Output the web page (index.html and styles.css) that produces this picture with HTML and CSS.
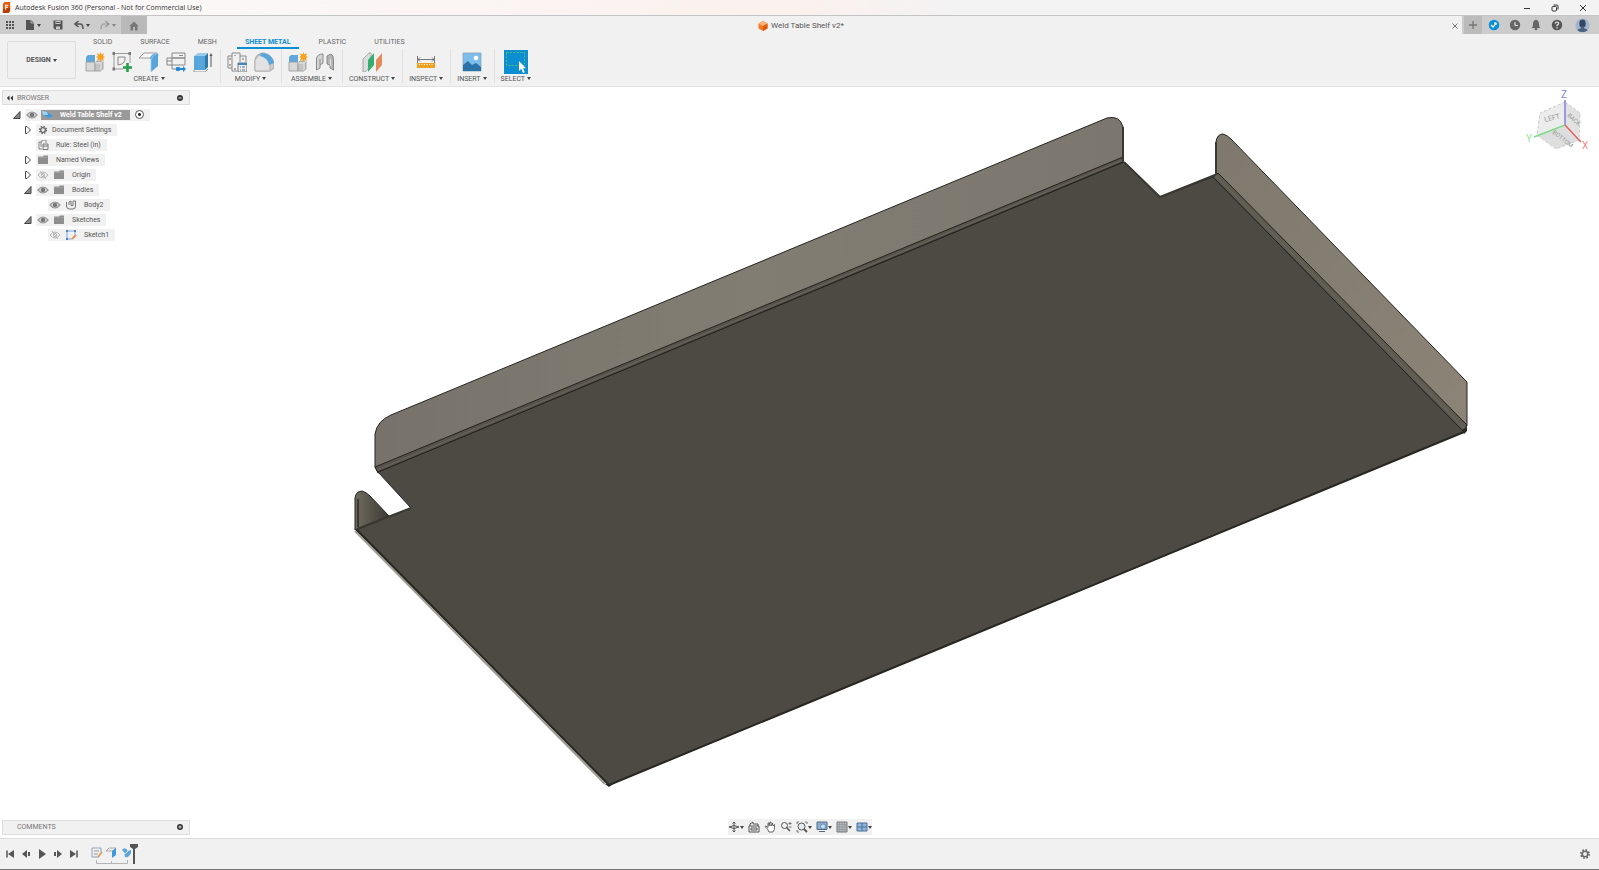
FILE: index.html
```html
<!DOCTYPE html>
<html lang="en">
<head>
    <meta charset="UTF-8">
    <meta name="viewport" content="width=device-width, initial-scale=1.0">
    <title>Autodesk Fusion 360</title>
    <link rel="stylesheet" href="styles.css">
</head>
<body>

<!-- shared icons -->
<svg class="sprite" aria-hidden="true">
    <symbol id="eye" viewBox="0 0 14 10">
        <path d="M2 5Q7 -1 12 5Q7 11 2 5Z" fill="#d8d8d8" stroke="#999" stroke-width="1.2"/>
        <circle cx="7" cy="5" r="2.2" fill="#777"/>
    </symbol>
    <symbol id="eye-off" viewBox="0 0 14 10">
        <path d="M2 5Q7 -1 12 5Q7 11 2 5Z" fill="#f4f4f4" stroke="#b5b5b5"/>
        <circle cx="7" cy="5" r="1.7" fill="none" stroke="#b5b5b5"/>
        <path d="M4 1L10 9" stroke="#b5b5b5"/>
    </symbol>
    <symbol id="folder" viewBox="0 0 14 10">
        <path d="M2 1.5H7L8 .5H12V9H2Z" fill="#8e8e8e"/>
        <path d="M2 2.5H12" stroke="#aaa" stroke-width=".6"/>
    </symbol>
    <symbol id="closed" viewBox="0 0 12 10">
        <path d="M3.500 1.500H5L8.500 5L5 8.500H3.500Z" fill="#fff" stroke="#444"/>
    </symbol>
    <symbol id="open" viewBox="0 0 12 10">
        <path d="M9 1.5V8.5H2.5Z" fill="#888" stroke="#444"/>
    </symbol>
    <symbol id="gear" viewBox="0 0 12 12">
        <circle cx="6" cy="6" r="4.2" fill="none" stroke="#666" stroke-width="1.6" stroke-dasharray="1.7 1.6"/>
        <circle cx="6" cy="6" r="2.8" fill="none" stroke="#666" stroke-width="1.6"/>
    </symbol>
    <symbol id="component" viewBox="0 0 20 20">
        <path d="M1 5L3 3H10V10H1Z" fill="#5fa8dc"/>
        <path d="M1 10H10V19H1Z" fill="#d8d8d8" stroke="#999" stroke-width=".8"/>
        <path d="M10 11L12 9H18V17L16 19H10Z" fill="#c4c4c4" stroke="#999" stroke-width=".8"/>
        <path d="M10 11H16V19M16 11L18 9" fill="none" stroke="#eee" stroke-width=".8"/>
        <path d="M15.500 0L16.500 2.600L19.200 1.300L17.900 4L20 5L17.900 6L19.200 8.700L16.500 7.400L15.500 10L14.500 7.400L11.800 8.700L13.100 6L11 5L13.100 4L11.800 1.300L14.500 2.600Z" fill="#f5a11c"/>
    </symbol>
</svg>

<header class="titlebar">
    <svg class="app-logo" viewBox="0 0 10 12"><path d="M1 2L3 0H9V10L7 12H1Z" fill="#e8590c"/><path d="M1 8L9 6V10L7 12H1Z" fill="#b83c00"/><path d="M4 8.500V3.500H7M4 5.700H6.500" fill="none" stroke="#fff" stroke-width="1.200"/></svg>
    <h1 class="app-title">Autodesk Fusion 360 (Personal - Not for Commercial Use)</h1>
    <div class="window-buttons">
        <button aria-label="Minimize"><svg viewBox="0 0 10 10"><path d="M2 5.500H8" stroke="#333"/></svg></button>
        <button aria-label="Restore"><svg viewBox="0 0 10 10"><rect x="2" y="3.500" width="4.500" height="4.500" rx="1" fill="none" stroke="#333"/><path d="M3.500 2H7Q8 2 8 3V6.500" fill="none" stroke="#333"/></svg></button>
        <button aria-label="Close"><svg viewBox="0 0 10 10"><path d="M2 2L8 8M8 2L2 8" stroke="#333"/></svg></button>
    </div>
</header>

<div class="tabstrip">
    <div class="quick-access">
        <button aria-label="Data panel"><svg viewBox="0 0 10 10"><path d="M1 2H9M1 5H9M1 8H9" stroke="#555" stroke-width="2" stroke-dasharray="2 1"/></svg></button>
        <button class="has-arrow" aria-label="File"><svg viewBox="0 0 10 10"><path d="M1 0H6L9 3V10H1Z" fill="#555"/><path d="M6 0V3H9" fill="none" stroke="#ccc" stroke-width=".8"/></svg></button>
        <button class="save" aria-label="Save"><svg viewBox="0 0 10 10"><path d="M.5 .5H9.500V9.500H2L.5 8Z" fill="#555"/><path d="M2.500 1H7.500V4H2.500ZM3 6.500H7V9H3Z" fill="#ccc"/><path d="M3 2.500H7" stroke="#555"/></svg></button>
        <button class="has-arrow" aria-label="Undo"><svg viewBox="0 0 10 10"><path d="M4.500 1L1 4L4.500 7M1 4H6Q9 4 9 9" fill="none" stroke="#555" stroke-width="1.500"/></svg></button>
        <button class="has-arrow faded" aria-label="Redo"><svg viewBox="0 0 10 10"><path d="M5.500 1L9 4L5.500 7M9 4H4Q1 4 1 9" fill="none" stroke="#666" stroke-width="1.200"/></svg></button>
    </div>
    <button class="home-tab" aria-label="Home"><svg viewBox="0 0 10 10"><path d="M5 .5L9.500 5H8.500V9.500H6V6H4V9.500H1.500V5H.5Z" fill="#777"/></svg></button>
    <div class="doc-tab">
        <svg class="doc-icon" viewBox="0 0 10 10"><path d="M5 0L9.500 2.500V7.500L5 10L.5 7.500V2.500Z" fill="#f47a20"/><path d="M5 0L9.500 2.500L5 5L.5 2.500Z" fill="#fbb37c"/><path d="M5 5L9.500 2.500V7.500L5 10Z" fill="#d95b0b"/></svg>
        <span>Weld Table Shelf v2*</span>
        <button class="close-tab" aria-label="Close tab"><svg viewBox="0 0 10 10"><path d="M2.500 2.500L7.500 7.500M7.500 2.500L2.500 7.500" stroke="#777"/></svg></button>
    </div>
    <button class="new-tab" aria-label="New tab"><svg viewBox="0 0 10 10"><path d="M5 1V9M1 5H9" stroke="#777" stroke-width="1.400"/></svg></button>
    <div class="account">
        <button aria-label="Extensions"><svg viewBox="0 0 12 12"><circle cx="6" cy="6" r="5.300" fill="#0b8fd9"/><path d="M3 6L5 8L8.500 4M7 3V5H9" fill="none" stroke="#fff" stroke-width="1.200"/></svg></button>
        <button aria-label="Job status"><svg viewBox="0 0 12 12"><circle cx="6" cy="6" r="5.200" fill="#666"/><path d="M6 3V6.500H9" fill="none" stroke="#ddd" stroke-width="1.200"/></svg></button>
        <button aria-label="Notifications"><svg viewBox="0 0 12 12"><path d="M6 .5Q9 1.500 9 5Q9 8 10.500 9H1.500Q3 8 3 5Q3 1.500 6 .5Z" fill="#666"/><circle cx="6" cy="10" r="1.300" fill="#666"/></svg></button>
        <button aria-label="Help"><svg viewBox="0 0 12 12"><circle cx="6" cy="6" r="5.200" fill="#555"/><path d="M4.300 4.600Q4.500 3 6 3Q7.700 3 7.700 4.500Q7.700 5.500 6 6.200V7.300M6 8.300V9.500" fill="none" stroke="#eee" stroke-width="1.200"/></svg></button>
        <button class="avatar" aria-label="Profile"><svg viewBox="0 0 16 16"><circle cx="8" cy="8" r="7.500" fill="#a3b5cf"/><ellipse cx="8" cy="6" rx="3.400" ry="4.400" fill="#33475e"/><path d="M6.500 9H9.500V11Q13 11.500 13.500 13Q8 17 2.500 13Q3 11.500 6.500 11Z" fill="#4a6080"/></svg></button>
    </div>
</div>

<div class="ribbon">
    <button class="workspace arrow">DESIGN</button>
    <div class="ribbon-main">
        <nav class="ribbon-tabs">
            <a href="#">SOLID</a>
            <a href="#">SURFACE</a>
            <a href="#">MESH</a>
            <a href="#" class="active">SHEET METAL</a>
            <a href="#">PLASTIC</a>
            <a href="#">UTILITIES</a>
        </nav>
        <div class="groups">
            <div class="group">
                <div class="tools">
                    <button aria-label="New component"><svg viewBox="0 0 20 20"><use href="#component"/></svg></button>
                    <button aria-label="Create sketch"><svg viewBox="0 0 20 20"><path d="M2 1.500H18M2 1.500V17M18 1.500V11M2 17H11" stroke="#999" fill="none"/><path d="M.5 0H3V3H.5ZM16.500 0H19V3H16.500ZM.5 15.500H3V18.500H.5Z" fill="#777"/><path d="M6 13V5H13Q14 12 6 13Z" fill="none" stroke="#888"/><path d="M15.500 11V20M11 15.500H20" stroke="#22a04a" stroke-width="2.600"/></svg></button>
                    <button aria-label="Flange"><svg viewBox="0 0 20 20"><path d="M0 6L5 1H18L13 6Z" fill="#f7f7f7" stroke="#888" stroke-width=".8"/><path d="M11 6Q12 2 18 1Q20 2 19 5V14L12 20V8Z" fill="#58a5dc"/><path d="M12 20V8Q13 3 18 1.500" fill="none" stroke="#9acbee" stroke-width=".8"/></svg></button>
                    <button aria-label="Unfold"><svg viewBox="0 0 20 20"><path d="M6 1H19V6H6ZM1 6H19V13H1ZM6 13V17H11M13 3.500H17" fill="none" stroke="#888"/><path d="M6 6V13M1 9H6" stroke="#888"/><circle cx="12" cy="17" r="2.300" fill="#2388d6"/><path d="M13 16H17V14L20 17L17 20V18H13Z" fill="#2388d6"/></svg></button>
                    <button aria-label="Extrude"><svg viewBox="0 0 20 20"><path d="M1 4L5 1H15L12 4Z" fill="#9acaea"/><path d="M1 4H12V18H1Z" fill="#58a5dc"/><path d="M12 4L15 1V15L12 18Z" fill="#3078aa"/><path d="M1 18V20H12L15 17" fill="none" stroke="#999"/><path d="M18 3V15" stroke="#555"/><path d="M16.500 4L18 1L19.500 4Z" fill="#555"/></svg></button>
                </div>
                <button class="group-label arrow">CREATE</button>
            </div>
            <div class="group">
                <div class="tools">
                    <button aria-label="Sheet metal rules"><svg viewBox="0 0 20 20"><path d="M5 1H13V4H19V10M5 1V4H1V16H5V19H10M5 4V16M13 4V10" fill="none" stroke="#888"/><path d="M3 6V8M3 12V14M16 6V8M8 3V4M8 16V18" stroke="#666"/><path d="M11 11H20V20H11Z" fill="#eee" stroke="#777"/><path d="M11 12H20" stroke="#3d86bf" stroke-width="2"/><path d="M13 15H18M13 18H18" stroke="#4a7ba3" stroke-dasharray="1 1 4"/></svg></button>
                    <button aria-label="Fillet"><svg viewBox="0 0 20 20"><path d="M1 19V8Q2 1 10 1Q19 3 20 12V16L16 19Z" fill="#ccc" stroke="#999" stroke-width=".8"/><path d="M1 19V8L5 3Q13 4 16 11V19Z" fill="#e2e2e2" stroke="#aaa" stroke-width=".8"/><path d="M7 1Q18 1 20 11L15 13Q14 6 6 4Z" fill="#58a5dc"/></svg></button>
                </div>
                <button class="group-label arrow">MODIFY</button>
            </div>
            <div class="group">
                <div class="tools">
                    <button aria-label="New component"><svg viewBox="0 0 20 20"><use href="#component"/></svg></button>
                    <button aria-label="Joint"><svg viewBox="0 0 20 20"><path d="M1.500 18V7Q2 2 8 2V11L5 13V16Z" fill="#d5d5d5" stroke="#888"/><path d="M5 7V13" stroke="#888"/><path d="M12 4L16 2Q18.500 3 18.500 8V18L15 16V13L12 12Z" fill="#b5b5b5" stroke="#888"/><path d="M15.500 7V14" stroke="#e4e4e4"/></svg></button>
                </div>
                <button class="group-label arrow">ASSEMBLE</button>
            </div>
            <div class="group">
                <div class="tools">
                    <button aria-label="Offset plane"><svg viewBox="0 0 20 20"><path d="M1 7L7 1H9V14L3 20H1Z" fill="#ddd" stroke="#999" stroke-width=".8"/><path d="M6 8L12 1V13L6 20Z" fill="#35ae70"/><path d="M14 8L20 1V13L14 20Z" fill="#e58a5b"/></svg></button>
                </div>
                <button class="group-label arrow">CONSTRUCT</button>
            </div>
            <div class="group">
                <div class="tools">
                    <button aria-label="Measure"><svg viewBox="0 0 20 20"><path d="M1.500 4V11M18.500 4V11M2 7.500H18M4 5.500L2 7.500L4 9.500M16 5.500L18 7.500L16 9.500" fill="none" stroke="#777"/><path d="M1 11H19V16H1Z" fill="#f0a21e"/><path d="M3 12.500H18" stroke="#fff" stroke-dasharray="1 1.500"/></svg></button>
                </div>
                <button class="group-label arrow">INSPECT</button>
            </div>
            <div class="group">
                <div class="tools">
                    <button aria-label="Insert image"><svg viewBox="0 0 20 20"><path d="M1 1H19V19H1Z" fill="#7dbdeb" stroke="#8aa5b8" stroke-width=".8"/><path d="M1 13L6 9L10 13L14 11L19 15V19H1Z" fill="#2a72a8"/><circle cx="14" cy="6" r="2.300" fill="#fff"/></svg></button>
                </div>
                <button class="group-label arrow">INSERT</button>
            </div>
            <div class="group">
                <div class="tools">
                    <button class="selected" aria-label="Select"><svg viewBox="0 0 24 24"><rect x="2.500" y="2.500" width="18" height="13" fill="none" stroke="#58b878" stroke-dasharray="2 1.500"/><path d="M15 11V21L17.300 18.800L19 23L20.800 22.200L19 18.300H22Z" fill="#fff"/></svg></button>
                </div>
                <button class="group-label arrow">SELECT</button>
            </div>
        </div>
    </div>
</div>

<main class="canvas">
    <svg class="model" viewBox="0 87 1599 751" preserveAspectRatio="xMidYMid meet">
        <defs>
            <linearGradient id="back" x1="0" x2="1"><stop offset="0" stop-color="#78736a"/><stop offset=".5" stop-color="#827d73"/><stop offset="1" stop-color="#7c776e"/></linearGradient>
            <linearGradient id="side" x1="0" y1="0" x2="1" y2="1"><stop offset="0" stop-color="#7e786e"/><stop offset="1" stop-color="#8c8476"/></linearGradient>
            <linearGradient id="tip" x1="0" x2="1"><stop offset="0" stop-color="#706b60"/><stop offset="1" stop-color="#3d3a34"/></linearGradient>
        </defs>
        <g stroke="#25231f" stroke-linejoin="round">
            <path d="M375 467V434Q377 421 391 415L1107 118Q1120 115 1123 127V162L378 473Z" fill="url(#back)"/>
            <path d="M1216 173V142Q1217 134 1223 134Q1227 135 1231 139L1467 382V425L1463 432L1213 177Z" fill="url(#side)"/>
            <path d="M355 530V498Q356 491 362 491Q366 492 370 496L389 516Z" fill="url(#tip)"/>
            <path d="M378 472L1124 162L1160 197L1213 177L1464 432L609 785L356 530L411 508Z" fill="#4d4a43"/>
            <path d="M375 467L1123 157V162L378 472Z" fill="#57534b"/>
            <path d="M1218 173L1467 425L1464 432L1213 177Z" fill="#5f5b52"/>
        </g>
        <path d="M377 470L1123 160M1216 176L1465 429" stroke="#6a665d" fill="none"/>
        <path d="M1124 162L1160 197L1215 175M411 508L357 529M358 499V527" stroke="#3a3832" stroke-width="2" fill="none"/>
        <path d="M1123 127V161M1216 142V174" stroke="#3a3832" stroke-width="2" fill="none"/>
        <path d="M355 531L605 784" stroke="#a09c94" stroke-width="2" fill="none"/>
        <path d="M357 530L609 785L1464 432" stroke="#292722" stroke-width="2" fill="none"/>
        <path d="M605 784H613L609 787ZM1462 430L1467 427V431L1464 434Z" fill="#292722"/>
        <g class="cube">
            <path d="M1565 102L1540 113L1537 135L1565 125Z" fill="#ececec"/>
            <path d="M1565 102L1580 113L1579 137L1565 125Z" fill="#e2e2e2"/>
            <path d="M1565 125L1537 135L1556 149L1579 140Z" fill="#dedede"/>
            <path d="M1565 102L1540 113L1537 135L1556 149L1579 140L1580 113Z" fill="none" stroke="#c8c8c8" stroke-dasharray="3 2"/>
            <text transform="translate(1545 122) rotate(-14)">LEFT</text>
            <text class="small" transform="translate(1567 116) rotate(42)">BACK</text>
            <text class="small" transform="translate(1552 133) rotate(38)">BOTTOM</text>
            <path d="M1565 125V100" stroke="#8080e0" stroke-width="1.500"/>
            <path d="M1565 125L1534 137" stroke="#7ddc87" stroke-width="1.500"/>
            <path d="M1565 125L1581 142" stroke="#e45b5b" stroke-width="1.500"/>
            <text class="axis axis-z" x="1561" y="98">Z</text>
            <text class="axis axis-y" x="1526" y="142">Y</text>
            <text class="axis axis-x" x="1582" y="149">X</text>
        </g>
    </svg>

    <aside class="browser">
        <div class="panel-bar">
            <svg class="collapse" viewBox="0 0 8 6"><path d="M4 0V6L1 3ZM8 0V6L5 3Z" fill="#333"/></svg>
            <h2>BROWSER</h2>
            <button aria-label="Hide browser"><svg viewBox="0 0 8 8"><circle cx="4" cy="4" r="3" fill="#333"/><path d="M2.500 4H5.500" stroke="#ddd"/></svg></button>
        </div>
        <ul class="tree">
            <li>
                <div class="row"><svg class="twisty"><use href="#open"/></svg><span class="chip root"><svg><use href="#eye"/></svg><strong><svg viewBox="0 0 14 10"><path d="M1 1L6 2L12 6L8 8L2 5Z" fill="#3c9be0"/><path d="M1 1L6 2L7 5L2 5Z" fill="#a5d2f2"/></svg>Weld Table Shelf v2</strong><input type="radio" aria-label="Activate component" checked></span></div>
                <ul>
                    <li><div class="row"><svg class="twisty"><use href="#closed"/></svg><span class="chip"><svg><use href="#gear"/></svg>Document Settings</span></div></li>
                    <li><div class="row"><span class="twisty"></span><span class="chip"><svg viewBox="0 0 14 10"><path d="M3 9V2H6V0H10V3M3 9H6M5 2V7" fill="none" stroke="#888"/><path d="M7 4H12V9.500H7ZM7 6H12" fill="#eee" stroke="#777"/></svg><span class="label">Rule: Steel (in)</span></span></div></li>
                    <li><div class="row"><svg class="twisty"><use href="#closed"/></svg><span class="chip"><svg><use href="#folder"/></svg><span class="label">Named Views</span></span></div></li>
                    <li><div class="row"><svg class="twisty"><use href="#closed"/></svg><span class="chip"><svg><use href="#eye-off"/></svg><svg><use href="#folder"/></svg><span class="label">Origin</span></span></div></li>
                    <li>
                        <div class="row"><svg class="twisty"><use href="#open"/></svg><span class="chip"><svg><use href="#eye"/></svg><svg><use href="#folder"/></svg><span class="label">Bodies</span></span></div>
                        <ul>
                            <li><div class="row"><span class="chip"><svg><use href="#eye"/></svg><svg viewBox="0 0 14 10"><path d="M2.500 2V6Q2.500 9 5.500 9H9Q11.500 9 11.500 6V1H9V5.500H7V1L5 2V5" fill="#eee" stroke="#777"/></svg><span class="label">Body2</span></span></div></li>
                        </ul>
                    </li>
                    <li>
                        <div class="row"><svg class="twisty"><use href="#open"/></svg><span class="chip"><svg><use href="#eye"/></svg><svg><use href="#folder"/></svg><span class="label">Sketches</span></span></div>
                        <ul>
                            <li><div class="row"><span class="chip"><svg><use href="#eye-off"/></svg><svg viewBox="0 0 14 10"><path d="M3 1H11V5M3 1V9H8" fill="none" stroke="#7aa5dc"/><path d="M2 0H4V2H2ZM10 0H12V2H10ZM2 8H4V10H2Z" fill="#5680b8"/><path d="M8 9L12 5" stroke="#e8935a" stroke-width="2"/></svg><span class="label">Sketch1</span></span></div></li>
                        </ul>
                    </li>
                </ul>
            </li>
        </ul>
    </aside>

    <div class="bottom-row">
        <div class="panel-bar comments">
            <h2>COMMENTS</h2>
            <button aria-label="Show comments"><svg viewBox="0 0 8 8"><circle cx="4" cy="4" r="3" fill="#333"/><path d="M2.500 4H5.500M4 2.500V5.500" stroke="#ddd"/></svg></button>
        </div>
        <div class="navbar">
            <button class="has-arrow" aria-label="Orbit"><svg viewBox="0 0 12 12"><path d="M6 1V11M1 6Q6 3 11 6Q6 9 1 6M4.500 2.500L6 1L7.500 2.500M4.500 9.500L6 11L7.500 9.500" fill="none" stroke="#555"/></svg></button>
            <button aria-label="Look at"><svg viewBox="0 0 12 12"><path d="M1 5H11V11H1ZM2 5V3L5 1V3H10V5M3 7H9V9H3Z" fill="none" stroke="#555"/></svg></button>
            <button aria-label="Pan"><svg viewBox="0 0 12 12"><path d="M3.500 8L1 5.500L2 5L4 6.500V2H5V5L6 1H7V5L8.500 2L9 5L10.500 3.500Q11 9 9 11H5Z" fill="#fff" stroke="#555" stroke-width=".9"/></svg></button>
            <button aria-label="Zoom"><svg viewBox="0 0 12 12"><circle cx="4.500" cy="4.500" r="3" fill="none" stroke="#555"/><path d="M6.500 6.500L10 10" stroke="#555" stroke-width="1.500"/><path d="M8.500 2.500H11.500M10 1V4M8.500 6H11.500" stroke="#555" stroke-width=".8"/></svg></button>
            <button class="has-arrow" aria-label="Fit"><svg viewBox="0 0 12 12"><path d="M1 3V1H3M9 1H11V3M1 9V11H3" fill="none" stroke="#777"/><circle cx="5.500" cy="5.500" r="3.500" fill="#e6edf3" stroke="#555"/><path d="M8 8L11 11" stroke="#555" stroke-width="1.800"/></svg></button>
            <button class="has-arrow" aria-label="Display settings"><svg viewBox="0 0 12 12"><path d="M1 1H11V8.500H1Z" fill="#8caed1" stroke="#566b82"/><path d="M3 10.500H9" stroke="#566b82"/><circle cx="7" cy="5.500" r="2.500" fill="#c5dcf2" stroke="#4b7dad" stroke-width=".7"/></svg></button>
            <button class="has-arrow" aria-label="Grid"><svg viewBox="0 0 12 12"><path d="M1 1H11V11H1Z" fill="#b5b8bc" stroke="#777"/><path d="M3.500 1V11M6 1V11M8.500 1V11M1 3.500H11M1 6H11M1 8.500H11" stroke="#8b8f94" stroke-width=".6"/></svg></button>
            <button class="has-arrow" aria-label="Viewports"><svg viewBox="0 0 12 12"><path d="M1 2H11V10H1Z" fill="#8fb7de" stroke="#4d6f94"/><path d="M6 2V10M1 6H11" stroke="#4d6f94"/></svg></button>
        </div>
    </div>
</main>

<footer class="timeline">
    <div class="playback">
        <button aria-label="Start"><svg viewBox="0 0 10 10"><path d="M2 1.500V8.500" stroke="#555" stroke-width="1.500"/><path d="M9 1V9L3 5Z" fill="#555"/></svg></button>
        <button aria-label="Step back"><svg viewBox="0 0 10 10"><path d="M6 1V9L1 5ZM7 3H9V7H7Z" fill="#555"/></svg></button>
        <button aria-label="Play"><svg viewBox="0 0 10 10"><path d="M2 0L9 5L2 10Z" fill="#555"/></svg></button>
        <button aria-label="Step forward"><svg viewBox="0 0 10 10"><path d="M4 1V9L9 5ZM1 3H3V7H1Z" fill="#555"/></svg></button>
        <button aria-label="End"><svg viewBox="0 0 10 10"><path d="M8 1.500V8.500" stroke="#555" stroke-width="1.500"/><path d="M1 1V9L7 5Z" fill="#555"/></svg></button>
    </div>
    <div class="features">
        <svg viewBox="0 0 48 24">
            <path d="M1 6H10V10M1 6V15H8" fill="#eee" stroke="#8ea5bd"/><path d="M3 9H8M3 12H7" stroke="#999"/><path d="M7 15L11 10" stroke="#dd9a57" stroke-width="1.800"/>
            <path d="M15 9L18 6H25L22 9Z" fill="#eee" stroke="#999" stroke-width=".8"/><path d="M21 9L25 6V13L21 16Z" fill="#3d9ade"/>
            <path d="M31 8Q34 4 37 9L40 8L40 11Q38 16 34 15L33 10Z" fill="#5ba7dd"/><path d="M31 11Q35 13 37 9" fill="none" stroke="#eee"/>
            <path d="M5.500 18V21.500H36.500V18M20.500 19V21" fill="none" stroke="#b5b5b5"/>
            <path d="M39 2H47V5L44 7V22H42V7L39 5Z" fill="#555"/>
        </svg>
    </div>
    <button class="settings" aria-label="Timeline settings"><svg viewBox="0 0 12 12"><use href="#gear"/></svg></button>
</footer>

</body>
</html>
```

FILE: styles.css
```css
* {
    box-sizing: border-box;
}

body {
    display: flex;
    flex-direction: column;
    min-height: 100vh;
    margin: 0;
    background-color: #fff;
    color: #555;
    font-family: Roboto, "Liberation Sans", sans-serif;
    font-size: 7px;
    line-height: 10px;
}

h1, h2, ul {
    margin: 0;
    padding: 0;
    font-size: 7px;
    font-weight: normal;
    list-style: none;
}

button {
    display: flex;
    align-items: center;
    justify-content: center;
    flex: none;
    padding: 0;
    border: none;
    background: none;
    color: inherit;
    font: inherit;
}

svg {
    display: block;
    flex: none;
}

.sprite {
    position: absolute;
    width: 0;
    height: 0;
}

.arrow::after,
.has-arrow::after {
    content: "";
    margin-left: 2px;
    border: 2px solid transparent;
    border-top: 3px solid #444;
    border-bottom: none;
}

/* title bar */
.titlebar {
    display: flex;
    align-items: center;
    height: 15px;
    padding-left: 2px;
    background: linear-gradient(90deg, #fafafa, #fbf1ee 50%, #f3f3f3 60%);
}

.app-logo {
    width: 9px;
    height: 11px;
}

.app-title {
    margin-left: 4px;
    color: #333;
    font-family: "Open Sans", sans-serif;
}

.window-buttons {
    display: flex;
    gap: 18px;
    margin-left: auto;
    padding-right: 11px;
}

.window-buttons svg {
    width: 10px;
    height: 10px;
}

/* document tabs */
.tabstrip {
    display: flex;
    height: 19px;
    background-color: #ccc;
    border-top: 1px solid #c4c4c4;
}

.quick-access {
    display: flex;
    align-items: center;
    gap: 10px;
    width: 121px;
    padding-left: 5px;
}

.quick-access svg {
    width: 10px;
    height: 10px;
}

.quick-access .save {
    margin: 0 1px 0 2px;
}

.faded {
    opacity: 0.5;
}

.home-tab {
    width: 26px;
    padding-top: 2px;
    background-color: #b9b9b9;
}

.home-tab svg {
    width: 10px;
    height: 10px;
}

.doc-tab {
    display: flex;
    flex: 1;
    align-items: center;
    gap: 3px;
    padding: 2px 0 0 8px;
    background-color: #f1f1f1;
    font-size: 8px;
}

.doc-icon {
    width: 10px;
    height: 10px;
    margin-left: auto;
}

.close-tab {
    margin-left: auto;
    padding-right: 2px;
}

.close-tab svg {
    width: 10px;
    height: 10px;
}

.new-tab {
    width: 18px;
    margin-left: 2px;
    background-color: #bbb;
}

.new-tab svg {
    width: 10px;
    height: 10px;
}

.account {
    display: flex;
    align-items: center;
    gap: 9px;
    padding: 0 9px 0 6px;
}

.account svg {
    width: 12px;
    height: 12px;
}

.account .avatar {
    margin-left: 3px;
}

.account .avatar svg {
    width: 15px;
    height: 15px;
}

/* ribbon */
.ribbon {
    display: flex;
    height: 53px;
    background-color: #f1f1f1;
    border-bottom: 1px solid #e2e2e2;
}

.workspace {
    width: 69px;
    height: 38px;
    margin: 7px 3px 0 7px;
    border: 1px solid #dcdcdc;
    border-radius: 2px;
    font-weight: bold;
}

.ribbon-tabs {
    display: flex;
    gap: 12px;
    padding: 2px 0 0 6px;
}

.ribbon-tabs a {
    padding: 1px 8px 0;
    border-bottom: 2px solid transparent;
    color: #666;
    text-decoration: none;
}

.ribbon-tabs .active {
    border-color: #0b90d4;
    color: #0b90d4;
    font-weight: bold;
}

.groups {
    display: flex;
}

.group {
    display: flex;
    flex-direction: column;
    align-items: center;
    padding: 0 7px 0 6px;
}

.group + .group {
    border-left: 1px solid #e0e0e0;
}

.tools {
    display: flex;
    align-items: center;
    gap: 7px;
    height: 25px;
}

.tools svg {
    width: 20px;
    height: 20px;
}

.tools .selected {
    background-color: #0b8fd0;
}

.tools .selected svg {
    width: 24px;
    height: 24px;
}

.group-label {
    height: 9px;
}

/* viewport */
.canvas {
    display: grid;
    flex: 1;
    grid-template-rows: 1fr auto;
}

.model {
    grid-area: 1 / 1 / 3 / 2;
    width: 100%;
}

.cube text {
    fill: #999;
    font-size: 7px;
}

.cube .small {
    font-size: 6px;
}

.cube .axis {
    font-size: 10px;
}

.cube .axis-z {
    fill: #8080e0;
}

.cube .axis-y {
    fill: #8fe797;
}

.cube .axis-x {
    fill: #f28a8a;
}

.browser {
    z-index: 1;
    grid-area: 1 / 1;
    width: 190px;
    padding: 3px 0 0 2px;
}

.panel-bar {
    display: flex;
    align-items: center;
    width: 188px;
    height: 15px;
    padding: 0 5px 0 3px;
    background-color: #f1f1f1;
    border: 1px solid #ddd;
    color: #777;
}

.panel-bar h2 {
    margin-left: 4px;
}

.panel-bar button {
    margin-left: auto;
}

.panel-bar svg {
    width: 8px;
    height: 8px;
}

.panel-bar .collapse {
    width: 7px;
    height: 6px;
}

.tree {
    padding-top: 2px;
}

.row {
    display: flex;
    align-items: center;
    height: 15px;
    padding-left: 9px;
}

.tree ul .row {
    padding-left: 20px;
}

.tree ul ul .row {
    padding-left: 46px;
}

.twisty {
    width: 12px;
    height: 10px;
    margin-right: 2px;
}

.chip {
    display: flex;
    align-items: center;
    gap: 2px;
    height: 12px;
    padding-right: 6px;
    background-color: #f1f1f1;
}

.chip svg {
    width: 14px;
    height: 10px;
}

.chip .label {
    padding-left: 4px;
}

.chip strong {
    display: flex;
    align-items: center;
    gap: 5px;
    padding-right: 8px;
    background-color: #999;
    color: #fff;
}

.chip input {
    width: 9px;
    height: 9px;
    margin: 0 0 0 3px;
    border: 1px solid #555;
    border-radius: 50%;
    appearance: none;
    background: radial-gradient(#333 25%, #fff 35%);
}

.bottom-row {
    z-index: 1;
    display: grid;
    grid-area: 2 / 1;
    grid-template-columns: 1fr auto 1fr;
    align-items: center;
    padding: 0 2px 3px;
}

.comments h2 {
    margin-left: 11px;
}

.navbar {
    display: flex;
    align-items: center;
    gap: 4px;
    height: 16px;
    background-color: #f1f1f1;
}

.navbar svg {
    width: 12px;
    height: 12px;
}

.navbar .has-arrow::after {
    margin-left: 0;
}

/* timeline */
.timeline {
    display: flex;
    align-items: center;
    height: 32px;
    padding: 0 8px 0 5px;
    background-color: #f1f1f1;
    border-top: 1px solid #ddd;
    border-bottom: 1px solid #777;
}

.playback {
    display: flex;
    gap: 6px;
}

.playback svg {
    width: 10px;
    height: 10px;
}

.features {
    margin-left: 12px;
}

.features svg {
    width: 48px;
    height: 24px;
}

.settings {
    margin-left: auto;
}

.settings svg {
    width: 12px;
    height: 12px;
}
```
